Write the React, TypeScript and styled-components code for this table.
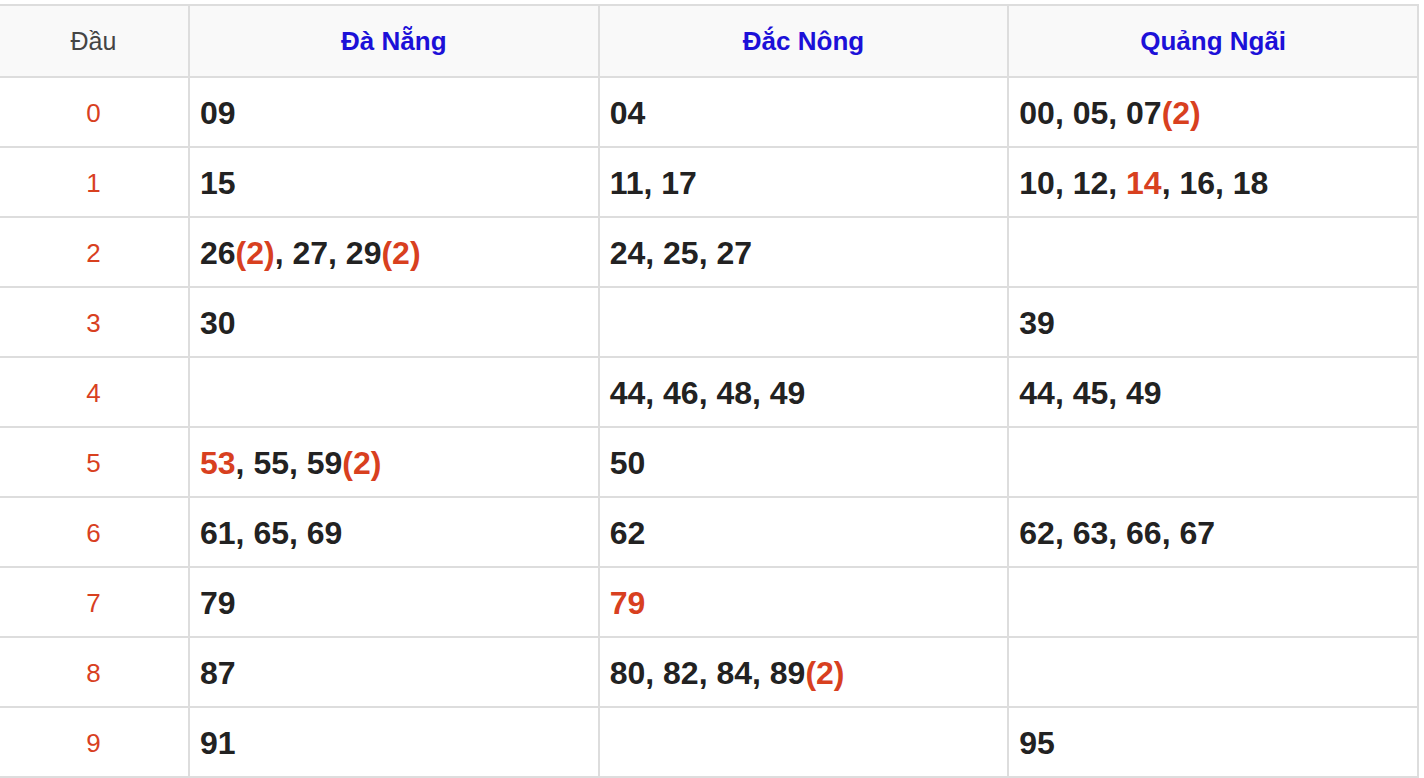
import React from "react";
import styled, { createGlobalStyle } from "styled-components";

const Global = createGlobalStyle`
  html, body { margin: 0; padding: 0; background: #fff; }
  body { font-family: "Liberation Sans", Arial, Helvetica, sans-serif; }
`;

const Wrap = styled.div`
  padding-top: 4px;
  margin-left: -3px;
`;

const Table = styled.table`
  border-collapse: collapse;
  width: 1422px;
  table-layout: fixed;
  border: 2px solid #dddddd;
`;

const HeadCell = styled.th<{ $province?: boolean }>`
  height: 70px;
  padding: 0;
  background: #f9f9f9;
  border: 2px solid #dddddd;
  text-align: center;
  font-size: ${(p) => (p.$province ? "26px" : "25px")};
  font-weight: ${(p) => (p.$province ? 700 : 400)};
  color: ${(p) => (p.$province ? "#1c10d8" : "#444444")};
`;

const HeadDigit = styled.td`
  box-sizing: border-box;
  height: 70px;
  padding: 2px 0 0;
  border: 2px solid #dddddd;
  text-align: center;
  font-size: 26px;
  line-height: 30px;
  color: #d8401f;
`;

const Cell = styled.td`
  box-sizing: border-box;
  height: 70px;
  padding: 2px 0 0 10px;
  border: 2px solid #dddddd;
  text-align: left;
  font-size: 32px;
  line-height: 36px;
  font-weight: 700;
  color: #222222;
  white-space: nowrap;
`;

const Hot = styled.span`
  color: #d8401f;
`;

type Item = { n: string; hot?: boolean; count?: number };

const parse = (s: string): Item[] =>
  s
    ? s.split(",").map((raw) => {
        const t = raw.trim();
        const hot = t.startsWith("*");
        const body = hot ? t.slice(1) : t;
        const m = body.match(/^(\d+)(?:\((\d+)\))?$/);
        return { n: m ? m[1] : body, hot, count: m && m[2] ? Number(m[2]) : undefined };
      })
    : [];

const rows: string[][] = [
  ["09", "04", "00, 05, 07(2)"],
  ["15", "11, 17", "10, 12, *14, 16, 18"],
  ["26(2), 27, 29(2)", "24, 25, 27", ""],
  ["30", "", "39"],
  ["", "44, 46, 48, 49", "44, 45, 49"],
  ["*53, 55, 59(2)", "50", ""],
  ["61, 65, 69", "62", "62, 63, 66, 67"],
  ["79", "*79", ""],
  ["87", "80, 82, 84, 89(2)", ""],
  ["91", "", "95"],
];

const provinces = ["Đà Nẵng", "Đắc Nông", "Quảng Ngãi"];

const Numbers: React.FC<{ items: Item[] }> = ({ items }) => (
  <>
    {items.map((it, i) => (
      <React.Fragment key={i}>
        {i > 0 && ", "}
        {it.hot ? <Hot>{it.n}</Hot> : it.n}
        {it.count ? <Hot>({it.count})</Hot> : null}
      </React.Fragment>
    ))}
  </>
);

export default function App() {
  return (
    <>
      <Global />
      <Wrap>
        <Table>
          <colgroup>
            <col style={{ width: 191 }} />
            <col />
            <col />
            <col />
          </colgroup>
          <thead>
            <tr>
              <HeadCell>Đầu</HeadCell>
              {provinces.map((p) => (
                <HeadCell key={p} $province>
                  {p}
                </HeadCell>
              ))}
            </tr>
          </thead>
          <tbody>
            {rows.map((r, i) => (
              <tr key={i}>
                <HeadDigit>{i}</HeadDigit>
                {r.map((c, j) => (
                  <Cell key={j}>
                    <Numbers items={parse(c)} />
                  </Cell>
                ))}
              </tr>
            ))}
          </tbody>
        </Table>
      </Wrap>
    </>
  );
}
